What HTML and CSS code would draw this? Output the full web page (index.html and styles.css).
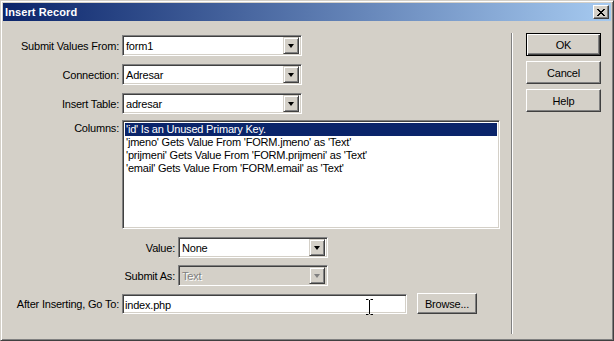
FILE: index.html
```html
<!doctype html>
<html>
  <head>
    <title>Insert Record</title>
    <link rel="stylesheet" href="styles.css">
  </head>
  <body>
    <div class="window">
      <div class="titlebar">
        <span class="title">Insert Record</span>
        <span class="close-btn">
          <svg width="8" height="7" viewBox="0 0 8 7"><path d="M0 0h2v1h1v1h2v-1h1v-1h2v1h-1v1h-1v1h-1v1h1v1h1v1h1v1h-2v-1h-1v-1h-2v1h-1v1h-2v-1h1v-1h1v-1h1v-1h-1v-1h-1v-1h-1z" fill="#000"/></svg>
        </span>
      </div>
      <div class="client">
        <div class="form">
          <div class="row row-first">
            <label class="lbl">Submit Values From:</label>
            <div class="combo combo-wide"><span class="combo-text">form1</span><span class="drop"><i class="arrow"></i></span></div>
          </div>
          <div class="row">
            <label class="lbl">Connection:</label>
            <div class="combo combo-wide"><span class="combo-text">Adresar</span><span class="drop"><i class="arrow"></i></span></div>
          </div>
          <div class="row">
            <label class="lbl">Insert Table:</label>
            <div class="combo combo-wide"><span class="combo-text">adresar</span><span class="drop"><i class="arrow"></i></span></div>
          </div>
          <div class="row row-list">
            <label class="lbl lbl-top">Columns:</label>
            <ul class="listbox">
              <li class="selected">'id' Is an Unused Primary Key.</li>
              <li>'jmeno' Gets Value From 'FORM.jmeno' as 'Text'</li>
              <li>'prijmeni' Gets Value From 'FORM.prijmeni' as 'Text'</li>
              <li>'email' Gets Value From 'FORM.email' as 'Text'</li>
            </ul>
          </div>
          <div class="row row-sub">
            <label class="lbl lbl-sub">Value:</label>
            <div class="combo combo-narrow"><span class="combo-text">None</span><span class="drop"><i class="arrow"></i></span></div>
          </div>
          <div class="row row-sub row-tight">
            <label class="lbl lbl-sub">Submit As:</label>
            <div class="combo combo-narrow disabled"><span class="combo-text">Text</span><span class="drop"><i class="arrow"></i></span></div>
          </div>
          <div class="row row-tight">
            <label class="lbl">After Inserting, Go To:</label>
            <div class="textbox">index.php</div>
            <span class="btn browse">Browse...</span>
          </div>
        </div>
        <div class="separator"></div>
        <div class="buttons">
          <span class="btn default">OK</span>
          <span class="btn">Cancel</span>
          <span class="btn">Help</span>
        </div>
      </div>
      <svg class="ibeam" width="7" height="16" viewBox="0 0 7 16"><path d="M0 0.5h2.5M4.5 0.5h2.5M3.5 1v14M0 15.5h2.5M4.5 15.5h2.5" stroke="#000" stroke-width="1"/></svg>
    </div>
  </body>
</html>
```

FILE: styles.css
```css
body { margin: 0; font-family: "Liberation Sans", Arial, sans-serif; font-size: 11px; letter-spacing: -0.2px; color: #000; }

.window { position: relative; width: 614px; height: 341px; box-sizing: border-box; background: #d4d0c8; border: 1px solid; border-color: #d4d0c8 #404040 #404040 #d4d0c8; box-shadow: inset 1px 1px #fff, inset -1px -1px #808080; padding: 2px; display: flex; flex-direction: column; }

.titlebar { height: 18px; display: flex; align-items: center; justify-content: space-between; background: linear-gradient(to right, #0a246a, #a6caf0); }
.title { color: #fff; font-weight: bold; padding-left: 2px; letter-spacing: 0.1px; }
.close-btn { width: 16px; height: 14px; margin-right: 2px; box-sizing: border-box; background: #d4d0c8; border: 1px solid; border-color: #fff #404040 #404040 #fff; box-shadow: inset -1px -1px #808080; display: flex; align-items: center; justify-content: center; }

.client { flex: 1; display: flex; }

.form { width: 506px; padding-top: 14px; }
.row { display: flex; align-items: center; gap: 3px; margin-top: 8px; height: 21px; }
.row-first { margin-top: 0; }
.row-tight { margin-top: 7px; }
.row-list { align-items: flex-start; height: auto; margin-top: 6px; }
.lbl { width: 116px; flex: none; text-align: right; white-space: nowrap; }
.lbl-top { padding-top: 2px; }
.lbl-sub { width: 172px; }
.row-sub { margin-top: 8px; }
.row-sub.row-tight { margin-top: 7px; }

.combo, .listbox, .textbox { box-sizing: border-box; border: 1px solid; border-color: #808080 #fff #fff #808080; box-shadow: inset 1px 1px #404040, inset -1px -1px #d4d0c8; background: #fff; }

.combo { height: 21px; display: flex; align-items: center; justify-content: space-between; padding: 2px; }
.combo-wide { width: 180px; }
.combo-narrow { width: 150px; }
.combo-text { padding-left: 1px; }
.drop { width: 16px; height: 17px; box-sizing: border-box; background: #d4d0c8; border: 1px solid; border-color: #d4d0c8 #404040 #404040 #d4d0c8; box-shadow: inset 1px 1px #fff, inset -1px -1px #808080; display: flex; align-items: center; justify-content: center; }
.arrow { width: 0; height: 0; border-left: 3.5px solid transparent; border-right: 3.5px solid transparent; border-top: 4px solid #000; }
.combo.disabled { background: #d4d0c8; }
.combo.disabled .combo-text { color: #808080; text-shadow: 1px 1px #fff; }
.combo.disabled .arrow { border-top-color: #808080; }

.listbox { width: 378px; height: 109px; margin: 0; padding: 2px; list-style: none; }
.listbox li { height: 13px; line-height: 13px; padding-left: 1px; white-space: nowrap; overflow: hidden; }
.listbox li.selected { background: #0a246a; color: #fff; }

.textbox { width: 285px; height: 20px; padding: 2px 3px 2px 2px; line-height: 16px; }

.btn { box-sizing: border-box; display: flex; align-items: center; justify-content: center; background: #d4d0c8; border: 1px solid; border-color: #fff #404040 #404040 #fff; box-shadow: inset -1px -1px #808080; }
.browse { width: 60px; height: 21px; margin-left: 7px; }

.separator { width: 0; margin: 12px 0 4px 2px; border-left: 1px solid #808080; border-right: 1px solid #fff; }

.buttons { display: flex; flex-direction: column; gap: 5px; padding-top: 12px; margin-left: 13px; }
.buttons .btn { width: 75px; height: 23px; }
.btn.default { border-color: #000; box-shadow: inset 1px 1px #fff, inset -1px -1px #404040, inset -2px -2px #808080; }

.ibeam { position: absolute; left: 365px; top: 298px; }
```
